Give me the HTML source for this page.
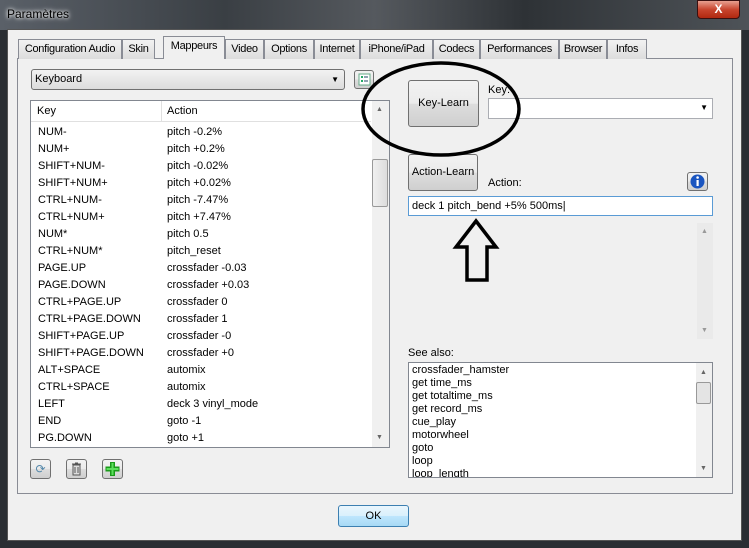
<!DOCTYPE html>
<html><head><meta charset="utf-8"><style>
*{box-sizing:border-box;margin:0;padding:0}
body{width:749px;height:548px;overflow:hidden;background:#2a2e33;font-family:"Liberation Sans",sans-serif;font-size:11px;color:#000;position:relative}
.a{position:absolute}
.tab{position:absolute;top:39px;height:20px;border:1px solid #898c95;border-bottom:none;background:linear-gradient(#f2f2f2,#dcdcdc);text-align:center;line-height:18px;letter-spacing:-0.3px}
.btn{position:absolute;border:1px solid #707070;border-radius:3px;background:linear-gradient(#f2f2f2 0%,#ebebeb 50%,#dddddd 51%,#cfcfcf 100%);text-align:center}
.row{position:absolute;left:7px;height:17px;line-height:17px}
.box{position:absolute;background:#fff;border:1px solid #828790}
</style></head><body>
<div class="a" style="left:0;top:0;width:749px;height:30px;background:linear-gradient(90deg,#5a6068,#3a3f44 30%,#55595e 50%,#2e3236 70%,#4e5358)"></div>
<div class="a" style="left:7px;top:7px;color:#000;font-size:12px;text-shadow:0 0 6px #fff,0 0 3px #fff">Paramètres</div>
<div class="a" style="left:697px;top:0;width:43px;height:19px;border:1px solid #3a1010;border-radius:0 0 4px 4px;background:linear-gradient(#e8a090,#c8452e 50%,#b02810);color:#fff;font-weight:bold;text-align:center;line-height:17px;font-size:12px">X</div>
<div class="a" style="left:7px;top:29px;width:735px;height:512px;background:#f0f0f0;border:1px solid #555"></div>
<div class="a" style="left:17px;top:58px;width:716px;height:436px;border:1px solid #898c95;background:#f0f0f0"></div>
<div class="tab" style="left:18px;width:104px">Configuration Audio</div>
<div class="tab" style="left:122px;width:33px">Skin</div>
<div class="tab" style="left:163px;width:62px;top:36px;height:23px;background:#f0f0f0;z-index:2">Mappeurs</div>
<div class="tab" style="left:225px;width:39px">Video</div>
<div class="tab" style="left:264px;width:50px">Options</div>
<div class="tab" style="left:314px;width:46px">Internet</div>
<div class="tab" style="left:360px;width:73px">iPhone/iPad</div>
<div class="tab" style="left:433px;width:47px">Codecs</div>
<div class="tab" style="left:480px;width:79px">Performances</div>
<div class="tab" style="left:559px;width:48px">Browser</div>
<div class="tab" style="left:607px;width:40px">Infos</div>
<div class="a" style="left:31px;top:69px;width:314px;height:21px;border:1px solid #707070;border-radius:3px;background:linear-gradient(#f2f2f2,#dcdcdc);padding-left:3px;line-height:19px">Keyboard<span style="position:absolute;right:5px;font-size:8px">▼</span></div>
<div class="btn" style="left:354px;top:70px;width:20px;height:19px"><svg width="18" height="17"><rect x="4" y="3" width="11" height="11" fill="#fff" stroke="#6a8"/><rect x="6" y="5" width="2" height="2" fill="#2a6"/><rect x="6" y="9" width="2" height="2" fill="#2a6"/><path d="M9 6h4M9 10h4" stroke="#246"/></svg></div>
<div class="box" style="left:30px;top:100px;width:360px;height:348px">
<div class="a" style="left:0;top:0;width:340px;height:21px;border-bottom:1px solid #e0e0e0;line-height:21px"><span class="a" style="left:6px">Key</span><span class="a" style="left:130px;top:0;height:21px;border-left:1px solid #e0e0e0"></span><span class="a" style="left:136px">Action</span></div>
<div class="a" style="left:341px;top:0;width:17px;height:346px;background:#f0f0f0"><div class="a" style="left:0;top:58px;width:16px;height:48px;border:1px solid #999;border-radius:2px;background:linear-gradient(90deg,#f0f0f0,#dcdcdc)"></div><span class="a" style="left:4px;top:5px;font-size:7px;color:#666">▲</span><span class="a" style="left:4px;top:333px;font-size:7px;color:#666">▼</span></div>
<div class="row" style="top:23px">NUM-</div><div class="row" style="top:23px;left:136px">pitch -0.2%</div>
<div class="row" style="top:40px">NUM+</div><div class="row" style="top:40px;left:136px">pitch +0.2%</div>
<div class="row" style="top:57px">SHIFT+NUM-</div><div class="row" style="top:57px;left:136px">pitch -0.02%</div>
<div class="row" style="top:74px">SHIFT+NUM+</div><div class="row" style="top:74px;left:136px">pitch +0.02%</div>
<div class="row" style="top:91px">CTRL+NUM-</div><div class="row" style="top:91px;left:136px">pitch -7.47%</div>
<div class="row" style="top:108px">CTRL+NUM+</div><div class="row" style="top:108px;left:136px">pitch +7.47%</div>
<div class="row" style="top:125px">NUM*</div><div class="row" style="top:125px;left:136px">pitch 0.5</div>
<div class="row" style="top:142px">CTRL+NUM*</div><div class="row" style="top:142px;left:136px">pitch_reset</div>
<div class="row" style="top:159px">PAGE.UP</div><div class="row" style="top:159px;left:136px">crossfader -0.03</div>
<div class="row" style="top:176px">PAGE.DOWN</div><div class="row" style="top:176px;left:136px">crossfader +0.03</div>
<div class="row" style="top:193px">CTRL+PAGE.UP</div><div class="row" style="top:193px;left:136px">crossfader 0</div>
<div class="row" style="top:210px">CTRL+PAGE.DOWN</div><div class="row" style="top:210px;left:136px">crossfader 1</div>
<div class="row" style="top:227px">SHIFT+PAGE.UP</div><div class="row" style="top:227px;left:136px">crossfader -0</div>
<div class="row" style="top:244px">SHIFT+PAGE.DOWN</div><div class="row" style="top:244px;left:136px">crossfader +0</div>
<div class="row" style="top:261px">ALT+SPACE</div><div class="row" style="top:261px;left:136px">automix</div>
<div class="row" style="top:278px">CTRL+SPACE</div><div class="row" style="top:278px;left:136px">automix</div>
<div class="row" style="top:295px">LEFT</div><div class="row" style="top:295px;left:136px">deck 3 vinyl_mode</div>
<div class="row" style="top:312px">END</div><div class="row" style="top:312px;left:136px">goto -1</div>
<div class="row" style="top:329px">PG.DOWN</div><div class="row" style="top:329px;left:136px">goto +1</div>
</div>
<div class="btn" style="left:30px;top:459px;width:21px;height:20px;font-size:12px;color:#58a;line-height:18px">⟳</div>
<div class="btn" style="left:66px;top:459px;width:21px;height:20px"><svg width="19" height="18"><rect x="6" y="5" width="7" height="10" fill="#ddd" stroke="#555"/><path d="M5 4h9M8 3h3M8 7v6M11 7v6" stroke="#555"/></svg></div>
<div class="btn" style="left:102px;top:459px;width:21px;height:20px"><svg width="19" height="18"><path d="M9.5 2v14M2.5 9h14" stroke="#1a9a1a" stroke-width="5"/><path d="M9.5 3v12M3.5 9h12" stroke="#5ce05c" stroke-width="2"/></svg></div>
<div class="btn" style="left:408px;top:80px;width:71px;height:47px;line-height:45px">Key-Learn</div>
<div class="a" style="left:488px;top:84px">Key:</div>
<div class="box" style="left:488px;top:98px;width:225px;height:21px;border-color:#abadb3"><span class="a" style="right:4px;top:4px;font-size:8px">▼</span></div>
<div class="btn" style="left:408px;top:154px;width:70px;height:37px;line-height:35px">Action-Learn</div>
<div class="a" style="left:488px;top:177px">Action:</div>
<div class="btn" style="left:687px;top:172px;width:21px;height:19px"><svg width="19" height="17"><circle cx="9.5" cy="8.5" r="7" fill="#1a55c0"/><rect x="8.5" y="7" width="2.2" height="6" fill="#fff"/><circle cx="9.6" cy="4.5" r="1.3" fill="#fff"/></svg></div>
<div class="box" style="left:408px;top:196px;width:305px;height:20px;border-color:#5a9bd5;padding-left:3px;line-height:18px">deck 1 pitch_bend +5% 500ms|</div>
<div class="a" style="left:697px;top:223px;width:16px;height:116px;background:#eaeaea"><span class="a" style="left:4px;top:5px;font-size:7px;color:#999">▲</span><span class="a" style="left:4px;top:104px;font-size:7px;color:#999">▼</span></div>
<div class="a" style="left:408px;top:347px">See also:</div>
<div class="box" style="left:408px;top:362px;width:305px;height:116px;overflow:hidden">
<div style="padding:1px 0 0 3px;line-height:13px">crossfader_hamster<br>get time_ms<br>get totaltime_ms<br>get record_ms<br>cue_play<br>motorwheel<br>goto<br>loop<br>loop_length</div>
<div class="a" style="left:287px;top:0;width:16px;height:114px;background:#f0f0f0"><div class="a" style="left:0;top:19px;width:15px;height:22px;border:1px solid #999;border-radius:2px;background:#e4e4e4"></div><span class="a" style="left:4px;top:6px;font-size:7px;color:#666">▲</span><span class="a" style="left:4px;top:102px;font-size:7px;color:#666">▼</span></div>
</div>
<div class="btn" style="left:338px;top:505px;width:71px;height:22px;line-height:20px;border-color:#3c7fb1;background:linear-gradient(#eaf6fd,#d9f0fc 50%,#bee6fd 51%,#a7d9f5)">OK</div>
<svg class="a" style="left:0;top:0" width="749" height="548"><ellipse cx="441" cy="109" rx="78" ry="46" fill="none" stroke="#000" stroke-width="3.5"/><path d="M476 221L496 247H487V280H467V247H456Z" fill="none" stroke="#000" stroke-width="3.5" stroke-linejoin="miter"/></svg>
</body></html>
